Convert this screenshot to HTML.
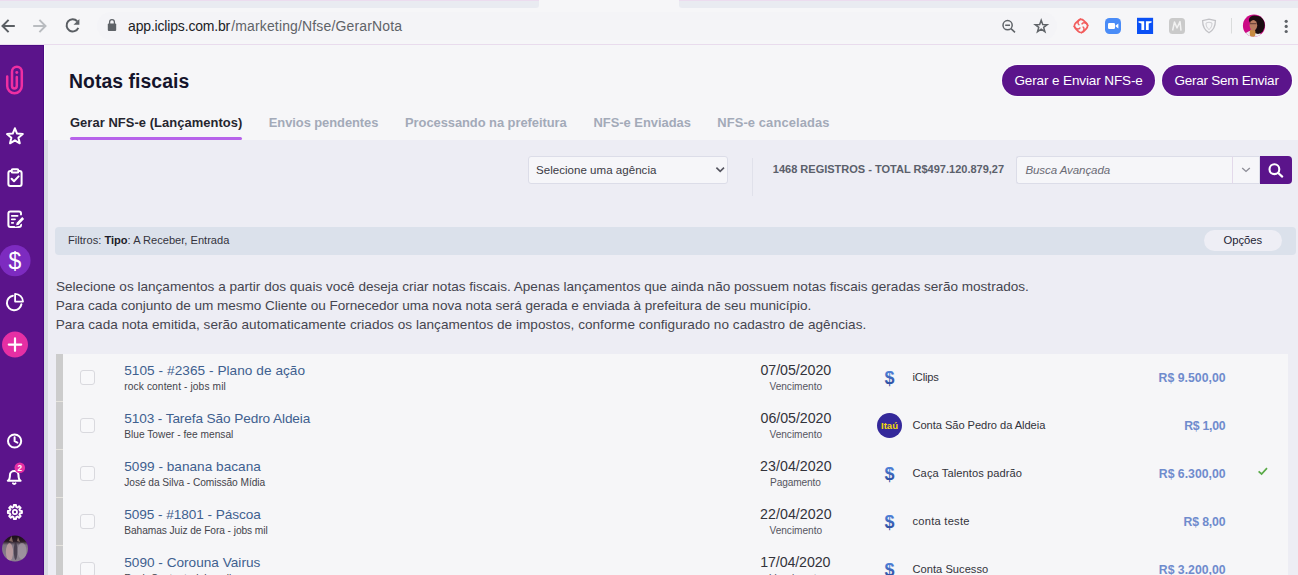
<!DOCTYPE html>
<html lang="pt-BR">
<head>
<meta charset="utf-8">
<title>Notas fiscais</title>
<style>
*{box-sizing:border-box;margin:0;padding:0}
html,body{width:1298px;height:575px;overflow:hidden;background:#f6f6f8;font-family:"Liberation Sans",sans-serif;color:#222}
.a{position:absolute}
.t{position:absolute;white-space:nowrap;line-height:20px;height:20px;font-weight:normal}
h1.t{font-weight:bold}
svg{position:absolute;left:0;top:0;overflow:visible}
.tabs{top:0;height:7.6px;background:#e9ebf1;border-top:1.6px solid #ecdcef}
#tool{left:0;top:8px;width:1298px;height:37px;background:#f6f6f8;border-bottom:1px solid #e9dced}
#omni{left:97px;top:12px;width:960px;height:28px;border-radius:14px;background:#f4f4f7}
#side{left:0;top:45px;width:44px;height:530px;background:#5b148b;border-right:1px solid #4b0a82;border-top:1px solid #4b0a82}
#head{left:44px;top:45px;width:1254px;height:95px;background:#f6f6f8;border-left:1px solid #fdfdfe}
#cont{left:44px;top:140px;width:1254px;height:435px;background:#ededf4}
#edge{left:44px;top:140px;width:4px;height:435px;background:#d9dce3}
#tabline{left:70px;top:137px;width:172px;height:2.5px;background:#b763ea;border-radius:1.5px}
.btn{top:65px;height:31px;border-radius:15.5px;background:#5b148b;box-shadow:0 0 0 1px #fdfdfe}
#selbox{left:528px;top:156px;width:200px;height:28px;background:#f6f6f9;border:1px solid #dcdde8;border-radius:3px}
#vdiv{left:752px;top:158px;width:1px;height:38px;background:#e0e1ea}
#sbox{left:1016px;top:156px;width:217px;height:28px;background:#f6f6f9;border:1px solid #dcdde8;border-right:1px solid #e3d9ea;border-radius:3px 0 0 3px}
#sdrop{left:1232px;top:156px;width:28px;height:28px;background:#f6f6f9;border:1px solid #dcdde8;border-left:1px solid #e3d9ea}
#sbtn{left:1260px;top:156px;width:32px;height:28px;background:#5b148b;border-radius:0 4px 4px 0}
#fbar{left:55px;top:227px;width:1241px;height:28px;background:#dbe1eb;border-radius:4px}
#opcb{left:1204px;top:230px;width:78px;height:21px;border-radius:10.5px;background:#eeeef5}
#list{left:56px;top:354px;width:1232px;height:222px;background:#f6f6f8}
#gbar{left:56px;top:354px;width:7px;height:222px;background:#cccccc;border-right:0}
.sep{left:56px;width:7px;height:1px;background:#e6e4de}
.cb{left:80px;width:15px;height:14.5px;border:1px solid #d9d9de;border-radius:3px;background:#f8f8fa}
.ita{position:absolute;left:877px;top:413px;width:25px;height:25px;border-radius:50%;background:#34289a}
#filt{left:68px}
</style>
</head>
<body>
<div class="a tabs" style="left:0;width:538.5px;border-radius:0 0 3px 0"></div>
<div class="a tabs" style="left:678.5px;width:620px;border-radius:0 0 0 3px"></div>
<div class="a" id="tool"></div>
<div class="a" id="omni"></div>
<div class="a" id="side"></div>
<div class="a" id="head"></div>
<div class="a" id="cont"></div>
<div class="a" id="edge"></div>
<div class="a" id="tabline"></div>
<div class="a btn" style="left:1001.5px;width:153px"></div>
<div class="a btn" style="left:1161.5px;width:130.5px"></div>
<div class="a" id="selbox"></div>
<div class="a" id="vdiv"></div>
<div class="a" id="sbox"></div>
<div class="a" id="sdrop"></div>
<div class="a" id="sbtn"></div>
<div class="a" id="fbar"></div>
<div class="a" id="opcb"></div>
<div class="a" id="list"></div>
<div class="a" id="gbar"></div>
<div class="a sep" style="top:401px"></div>
<div class="a sep" style="top:449px"></div>
<div class="a sep" style="top:497px"></div>
<div class="a sep" style="top:545px"></div>
<div class="a cb" style="top:370px"></div>
<div class="a cb" style="top:418px"></div>
<div class="a cb" style="top:466px"></div>
<div class="a cb" style="top:514px"></div>
<div class="a cb" style="top:562px"></div>
<div class="ita"></div>

<!-- browser chrome icons -->
<svg width="1298" height="44" viewBox="0 0 1298 44">
 <g fill="none" stroke="#5a5e63" stroke-width="2" stroke-linejoin="miter">
  <path d="M14.8,26 H3 M8.6,19.9 L2.5,26 L8.6,32.1"/>
  <path d="M33.2,26 H45 M39.4,19.9 L45.5,26 L39.4,32.1" stroke="#b9bcc0"/>
  <path d="M77.2,21.2 A6.1,6.1 0 1 0 78.3,27.8"/>
 </g>
 <path d="M79.4,18.9 V24.8 H73.5 Z" fill="#5f6368"/>
 <!-- lock -->
 <rect x="107.8" y="23.6" width="8.4" height="7.3" rx="1" fill="#5f6368"/>
 <path d="M109.6,24 V22.1 A2.4,2.4 0 0 1 114.4,22.1 V24" fill="none" stroke="#5f6368" stroke-width="1.3"/>
 <!-- zoom-out -->
 <g fill="none" stroke="#5f6368" stroke-width="1.5">
  <circle cx="1007.6" cy="25.2" r="4.6"/>
  <path d="M1011,28.6 L1015,32.4 M1005.2,25.2 H1010" />
 </g>
 <path d="M1041.20,20.30 L1042.73,24.50 L1047.19,24.65 L1043.67,27.40 L1044.90,31.70 L1041.20,29.20 L1037.50,31.70 L1038.73,27.40 L1035.21,24.65 L1039.67,24.50Z" fill="none" stroke="#5f6368" stroke-width="1.5" stroke-linejoin="miter"/>
 <!-- red swirl -->
 <g fill="none" stroke="#f25d5d" stroke-width="1.4">
  <rect x="1075.3" y="20.2" width="11.4" height="11.4" rx="3.8" transform="rotate(45 1081 25.9)" stroke-width="1.8"/>
  <path d="M1081,18.6 C1077,21 1077.4,24.2 1079.4,25.2 M1088.3,25.9 C1085.9,21.9 1082.7,22.3 1081.7,24.3 M1081,33.2 C1085,30.8 1084.6,27.6 1082.6,26.6 M1073.7,25.9 C1076.1,29.9 1079.3,29.5 1080.3,27.5" stroke-width="1.5"/>
 </g>
 <!-- zoom app -->
 <rect x="1105" y="18" width="16" height="16" rx="4.5" fill="#4a8cf7"/>
 <rect x="1108" y="23" width="7" height="6" rx="1.2" fill="#fff"/>
 <path d="M1115.6,25.4 L1118.4,23.4 V28.6 L1115.6,26.6 Z" fill="#fff"/>
 <!-- TT -->
 <rect x="1137" y="17.8" width="16.1" height="16.2" fill="#0a50f5"/>
 <path d="M1138.5,21.2 H1144.2 V30 H1141.4 V23.6 L1138.5,22.6 Z M1151.6,21.2 H1145.9 V30 H1148.7 V23.6 L1151.6,22.6 Z" fill="#fff"/>
 <!-- grey M -->
 <rect x="1169" y="18" width="16" height="16" rx="3.5" fill="#cacaca"/>
 <path d="M1172.6,30.5 L1174.5,22 L1177,28 L1180,21.6 L1181,30.6" fill="none" stroke="#f2f2f2" stroke-width="1.5" stroke-linejoin="round"/>
 <!-- shield -->
 <path d="M1202.6,20.6 L1209,19.2 L1215.4,20.6 C1215.4,26.5 1213.4,30.4 1209,32.8 C1204.6,30.4 1202.6,26.5 1202.6,20.6 Z" fill="none" stroke="#c2c2c6" stroke-width="1.3"/>
 <path d="M1206,23 L1209,22.2 L1212,23 C1212,26 1211,28.2 1209,29.6 C1207,28.2 1206,26 1206,23 Z" fill="none" stroke="#cfcfd3" stroke-width="1"/>
 <rect x="1231" y="18" width="1" height="15.5" fill="#dadcdc"/>
 <!-- profile avatar -->
 <defs><clipPath id="pc"><circle cx="1254" cy="25.7" r="11.1"/></clipPath></defs>
 <g clip-path="url(#pc)">
  <rect x="1242" y="14" width="24" height="24" fill="#cc0a85"/>
  <ellipse cx="1253" cy="38" rx="9.5" ry="7.4" fill="#ececf0"/>
  <ellipse cx="1258" cy="25" rx="6.8" ry="9" fill="#1c0d12"/>
  <ellipse cx="1254.5" cy="20" rx="5.6" ry="4.6" fill="#1c0d12"/>
  <ellipse cx="1252.6" cy="33" rx="2.9" ry="4.2" fill="#c78a40"/>
  <ellipse cx="1253.4" cy="25.2" rx="3.8" ry="5.2" fill="#b97c62"/>
  <rect x="1250" y="23.2" width="6.6" height="1" fill="#4a2a2a" opacity=".8"/>
 </g>
 <g fill="#5f6368"><circle cx="1286.2" cy="21.3" r="1.6"/><circle cx="1286.2" cy="26.4" r="1.6"/><circle cx="1286.2" cy="31.5" r="1.6"/></g>
</svg>

<!-- page icons -->
<svg width="1298" height="575" viewBox="0 0 1298 575">
 <!-- logo clip -->
 <g fill="none" stroke="#ef2fa2" stroke-width="2.5" stroke-linecap="round">
  <path d="M7.2,76.4 V86 A7.3,7.3 0 0 0 21.8,86 V71.7 A4.9,4.9 0 0 0 12,71.7 V86 A2.4,2.4 0 0 0 16.8,86 V77"/>
 </g>
 <circle cx="16.8" cy="72.5" r="1.45" fill="#ef2fa2"/>
 <g fill="none" stroke="#fff" stroke-width="2" stroke-linejoin="round" stroke-linecap="round">
  <path d="M14.90,128.30 L17.07,133.61 L22.79,134.04 L18.42,137.74 L19.78,143.31 L14.90,140.30 L10.02,143.31 L11.38,137.74 L7.01,134.04 L12.73,133.61Z"/>
  <!-- clipboard -->
  <path d="M11.5,171 H10.4 A2,2 0 0 0 8.4,173 V184 A2,2 0 0 0 10.4,186 H19.6 A2,2 0 0 0 21.6,184 V173 A2,2 0 0 0 19.6,171 H18.5"/>
  <rect x="11.6" y="169.2" width="6.8" height="3.4" rx="1.2"/>
  <path d="M11.6,178.8 L14,181.2 L18.6,176.4"/>
  <!-- edit -->
  <path d="M21,214.5 V213.5 A2,2 0 0 0 19,211.5 H10.4 A2,2 0 0 0 8.4,213.5 V225 A2,2 0 0 0 10.4,227 H19 A2,2 0 0 0 21,225 V224.5"/>
  <path d="M11.8,215.8 H17.6 M11.8,219.3 H15 M11.8,222.8 H13.2" stroke-width="1.8"/>
  <!-- pie -->
  <path d="M12.9,295.8 A7.3,7.3 0 1 0 21.4,304.3"/>
  <path d="M15.1,293.8 V301.6 H23 A7.9,7.9 0 0 0 15.1,293.8 Z" stroke-width="1.8"/>
  <!-- clock -->
  <circle cx="14.6" cy="441" r="6.6"/>
  <path d="M14.6,437.2 V441.2 L17.4,442.6"/>
  <!-- bell -->
  <g transform="translate(5.7,469.7) scale(0.71,0.65)" stroke-width="2.9">
   <path d="M18 8A6 6 0 0 0 6 8c0 7-3 9-3 9h18s-3-2-3-9"/><path d="M13.73 21a2 2 0 0 1-3.46 0"/>
  </g>
  <!-- gear -->
  <path d="M21.91,510.89 L21.91,513.11 L19.94,513.29 L19.38,514.65 L20.64,516.17 L19.07,517.74 L17.55,516.48 L16.19,517.04 L16.01,519.01 L13.79,519.01 L13.61,517.04 L12.25,516.48 L10.73,517.74 L9.16,516.17 L10.42,514.65 L9.86,513.29 L7.89,513.11 L7.89,510.89 L9.86,510.71 L10.42,509.35 L9.16,507.83 L10.73,506.26 L12.25,507.52 L13.61,506.96 L13.79,504.99 L16.01,504.99 L16.19,506.96 L17.55,507.52 L19.07,506.26 L20.64,507.83 L19.38,509.35 L19.94,510.71Z" stroke-width="1.9"/>
  <circle cx="14.9" cy="512" r="2.1" stroke-width="1.8"/>
 </g>
 <!-- pencil of edit icon -->
 <path d="M15.4,226.2 L16,222.6 L22.2,216.2 L25,219 L18.8,225.4 Z" fill="#fff" stroke="#5b148b" stroke-width="1.2" stroke-linejoin="round"/>
 <!-- $ circle -->
 <circle cx="15" cy="260.6" r="15.6" fill="#7d2bc0"/>
 <text x="15" y="268.6" font-family="Liberation Sans, sans-serif" font-size="23" fill="#fff" text-anchor="middle">$</text>
 <!-- plus -->
 <circle cx="15" cy="344.6" r="13" fill="#e62fa4"/>
 <path d="M8.8,344.6 H21.2 M15,338.4 V350.8" stroke="#fff" stroke-width="2.2" stroke-linecap="round"/>
 <!-- badge -->
 <circle cx="19.8" cy="467.8" r="5.3" fill="#e62fa4"/>
 <text x="19.8" y="470.7" font-family="Liberation Sans, sans-serif" font-size="8.2" font-weight="bold" fill="#fff" text-anchor="middle">2</text>
 <!-- user avatar -->
 <defs>
  <linearGradient id="av" x1="0" y1="0" x2="0" y2="1">
   <stop offset="0" stop-color="#1b0f1a"/><stop offset="0.22" stop-color="#2a1b26"/><stop offset="0.36" stop-color="#7d7280"/><stop offset="1" stop-color="#8d8390"/>
  </linearGradient>
  <clipPath id="ac"><circle cx="15" cy="548.6" r="13"/></clipPath>
 </defs>
 <circle cx="15" cy="548.6" r="13" fill="url(#av)"/>
 <g clip-path="url(#ac)">
  <ellipse cx="9.5" cy="552" rx="3.6" ry="9" fill="#c8a4a6" opacity=".75"/>
  <ellipse cx="22" cy="551" rx="4.5" ry="8" fill="#a79ba6" opacity=".7"/>
  <ellipse cx="15.6" cy="551" rx="1.8" ry="9" fill="#3a3040" opacity=".75"/>
  <path d="M9,541 L11.5,536 L13,542 Z M17,541 L18,537 L20,542 Z" fill="#9a7a70" opacity=".8"/>
 </g>

 <!-- select chevron -->
 <path d="M716.4,167.6 L720.2,171.4 L724,167.6" fill="none" stroke="#55555f" stroke-width="1.6"/>
 <path d="M1242.2,168 L1246,171.4 L1249.8,168" fill="none" stroke="#8e8e98" stroke-width="1.4"/>
 <!-- search icon -->
 <circle cx="1274.4" cy="169.2" r="4.9" fill="none" stroke="#fff" stroke-width="2.1"/>
 <path d="M1278.2,173 L1282.2,176.6" stroke="#fff" stroke-width="2.2" stroke-linecap="round"/>
 <!-- check -->
 <path d="M1258.6,471.4 L1261.6,474 L1267,468.2" fill="none" stroke="#5aaa48" stroke-width="1.7"/>
 <!-- row $ icons -->
 <defs><linearGradient id="dg" x1="0" y1="0" x2="0" y2="1"><stop offset="0.15" stop-color="#4f82d8"/><stop offset="0.85" stop-color="#2b4b9e"/></linearGradient></defs>
 <g font-family="Liberation Sans, sans-serif" font-size="18" font-weight="bold" fill="url(#dg)" text-anchor="middle">
  <text x="889.6" y="384.2">$</text>
  <text x="889.6" y="480.2">$</text>
  <text x="889.6" y="528.2">$</text>
  <text x="889.6" y="576.2">$</text>
 </g>
 <text x="889.5" y="428.6" font-family="Liberation Sans, sans-serif" font-size="9.6" font-weight="bold" fill="#f5d90a" text-anchor="middle">Itaú</text>
</svg>

<span class="t" id="filt" style="top:230px;font-size:11.1px;color:#33333d">Filtros: <b style="color:#1c1c28">Tipo</b>: A Receber, Entrada</span>
<span class="t" id="u1" style="left:128.1px;top:16px;font-size:13.97px;letter-spacing:-0.166px;color:#202124">app.iclips.com.br</span>
<span class="t" id="u2" style="left:231.2px;top:16px;font-size:13.97px;letter-spacing:0.161px;color:#5f6368">/marketing/Nfse/GerarNota</span>
<h1 class="t" id="h1" style="left:69px;top:70.6px;font-size:19.37px;letter-spacing:0.061px;color:#14142b">Notas fiscais</h1>
<a class="t" id="tab1" style="left:70px;top:113px;font-size:12.93px;letter-spacing:0.058px;color:#25252f;font-weight:bold">Gerar NFS-e (Lançamentos)</a>
<a class="t" id="tab2" style="left:268.75px;top:113px;font-size:12.93px;letter-spacing:-0.06px;color:#a3aab8;font-weight:bold">Envios pendentes</a>
<a class="t" id="tab3" style="left:405px;top:113px;font-size:12.93px;letter-spacing:-0.055px;color:#a3aab8;font-weight:bold">Processando na prefeitura</a>
<a class="t" id="tab4" style="left:593.5px;top:113px;font-size:12.93px;letter-spacing:-0.018px;color:#a3aab8;font-weight:bold">NFS-e Enviadas</a>
<a class="t" id="tab5" style="left:717.25px;top:113px;font-size:12.93px;letter-spacing:0.105px;color:#a3aab8;font-weight:bold">NFS-e canceladas</a>
<span class="t" id="b1" style="left:1014.4px;top:71.4px;font-size:13.5px;letter-spacing:-0.112px;color:#ffffff">Gerar e Enviar NFS-e</span>
<span class="t" id="b2" style="left:1174.6px;top:71.4px;font-size:13.5px;letter-spacing:-0.25px;color:#ffffff">Gerar Sem Enviar</span>
<span class="t" id="sel" style="left:536px;top:160px;font-size:11.54px;letter-spacing:0.027px;color:#3a3a44">Selecione uma agência</span>
<span class="t" id="regs" style="left:772.8px;top:159px;font-size:11.03px;letter-spacing:-0.003px;color:#5b606b;font-weight:bold">1468 REGISTROS - TOTAL R$497.120.879,27</span>
<span class="t" id="srch" style="left:1025.4px;top:160px;font-size:11.54px;letter-spacing:-0.086px;color:#6b6b75;font-style:italic">Busca Avançada</span>
<span class="t" id="opc" style="left:1223.4px;top:230.1px;font-size:11.27px;letter-spacing:-0.018px;color:#1c1c34">Opções</span>
<p class="t" id="p1" style="left:56px;top:277.25px;font-size:13.57px;letter-spacing:0.002px;color:#45454f">Selecione os lançamentos a partir dos quais você deseja criar notas fiscais. Apenas lançamentos que ainda não possuem notas fiscais geradas serão mostrados.</p>
<p class="t" id="p2" style="left:55.7px;top:296px;font-size:13.57px;letter-spacing:-0.031px;color:#45454f">Para cada conjunto de um mesmo Cliente ou Fornecedor uma nova nota será gerada e enviada à prefeitura de seu município.</p>
<p class="t" id="p3" style="left:55.7px;top:314.75px;font-size:13.57px;letter-spacing:0.037px;color:#45454f">Para cada nota emitida, serão automaticamente criados os lançamentos de impostos, conforme configurado no cadastro de agências.</p>
<span class="t" id="r0a" style="left:124.25px;top:361px;font-size:13.61px;letter-spacing:0.055px;color:#40608f">5105 - #2365 - Plano de ação</span>
<span class="t" id="r0b" style="left:124.25px;top:377px;font-size:10.2px;letter-spacing:0.111px;color:#44444c">rock content - jobs mil</span>
<span class="t" id="r0c" style="left:760.5px;top:360px;font-size:14.21px;letter-spacing:-0.048px;color:#33333b">07/05/2020</span>
<span class="t" id="r0d" style="left:769.5px;top:377px;font-size:10.15px;letter-spacing:-0.031px;color:#55555f">Vencimento</span>
<span class="t" id="r0e" style="left:912.5px;top:367.3px;font-size:11.13px;letter-spacing:-0.177px;color:#33333b">iClips</span>
<span class="t" id="r0f" style="left:1158.5px;top:367.5px;font-size:12.26px;letter-spacing:0.032px;color:#6f8bcd;font-weight:bold">R$ 9.500,00</span>
<span class="t" id="r1a" style="left:124.25px;top:409px;font-size:13.61px;letter-spacing:-0.098px;color:#40608f">5103 - Tarefa São Pedro Aldeia</span>
<span class="t" id="r1b" style="left:124.25px;top:425px;font-size:10.2px;letter-spacing:-0.001px;color:#44444c">Blue Tower - fee mensal</span>
<span class="t" id="r1c" style="left:760.5px;top:408px;font-size:14.21px;letter-spacing:-0.021px;color:#33333b">06/05/2020</span>
<span class="t" id="r1d" style="left:769.5px;top:425px;font-size:10.15px;letter-spacing:-0.031px;color:#55555f">Vencimento</span>
<span class="t" id="r1e" style="left:912.5px;top:415.3px;font-size:11.13px;letter-spacing:-0.058px;color:#33333b">Conta São Pedro da Aldeia</span>
<span class="t" id="r1f" style="left:1184.16px;top:415.5px;font-size:12.26px;letter-spacing:-0.25px;color:#6f8bcd;font-weight:bold">R$ 1,00</span>
<span class="t" id="r2a" style="left:124.25px;top:457px;font-size:13.61px;letter-spacing:0.019px;color:#40608f">5099 - banana bacana</span>
<span class="t" id="r2b" style="left:124.25px;top:473px;font-size:10.2px;letter-spacing:-0.061px;color:#44444c">José da Silva - Comissão Mídia</span>
<span class="t" id="r2c" style="left:760.0px;top:456px;font-size:14.21px;letter-spacing:0.063px;color:#33333b">23/04/2020</span>
<span class="t" id="r2d" style="left:770.0px;top:473px;font-size:10.15px;letter-spacing:-0.113px;color:#55555f">Pagamento</span>
<span class="t" id="r2e" style="left:912.5px;top:463.3px;font-size:11.13px;letter-spacing:0.077px;color:#33333b">Caça Talentos padrão</span>
<span class="t" id="r2f" style="left:1158.8px;top:463.5px;font-size:12.26px;letter-spacing:0.002px;color:#6f8bcd;font-weight:bold">R$ 6.300,00</span>
<span class="t" id="r3a" style="left:124.25px;top:505px;font-size:13.61px;letter-spacing:-0.057px;color:#40608f">5095 - #1801 - Páscoa</span>
<span class="t" id="r3b" style="left:124.25px;top:521px;font-size:10.2px;letter-spacing:-0.067px;color:#44444c">Bahamas Juiz de Fora - jobs mil</span>
<span class="t" id="r3c" style="left:760.0px;top:504px;font-size:14.21px;letter-spacing:0.063px;color:#33333b">22/04/2020</span>
<span class="t" id="r3d" style="left:769.5px;top:521px;font-size:10.15px;letter-spacing:-0.031px;color:#55555f">Vencimento</span>
<span class="t" id="r3e" style="left:912.5px;top:511.3px;font-size:11.13px;letter-spacing:0.251px;color:#33333b">conta teste</span>
<span class="t" id="r3f" style="left:1183.6px;top:511.5px;font-size:12.26px;letter-spacing:-0.157px;color:#6f8bcd;font-weight:bold">R$ 8,00</span>
<span class="t" id="r4a" style="left:124.25px;top:553px;font-size:13.61px;letter-spacing:0.007px;color:#40608f">5090 - Corouna Vairus</span>
<span class="t" id="r4b" style="left:124.25px;top:569px;font-size:10.2px;letter-spacing:0.078px;color:#44444c">Rock Content - jobs mil</span>
<span class="t" id="r4c" style="left:760.25px;top:552px;font-size:14.21px;letter-spacing:-0.104px;color:#33333b">17/04/2020</span>
<span class="t" id="r4d" style="left:769.5px;top:569px;font-size:10.15px;letter-spacing:-0.031px;color:#55555f">Vencimento</span>
<span class="t" id="r4e" style="left:912.5px;top:559.3px;font-size:11.13px;letter-spacing:0.02px;color:#33333b">Conta Sucesso</span>
<span class="t" id="r4f" style="left:1158.8px;top:559.5px;font-size:12.26px;letter-spacing:0.002px;color:#6f8bcd;font-weight:bold">R$ 3.200,00</span>
</body>
</html>
